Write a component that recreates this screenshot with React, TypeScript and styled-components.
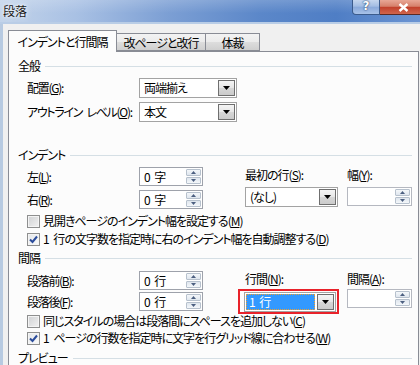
import React from 'react'
import styled, { createGlobalStyle } from 'styled-components'

const GlobalStyle = createGlobalStyle`
  html, body {
    margin: 0;
    padding: 0;
  }
  body {
    width: 420px;
    height: 365px;
    overflow: hidden;
    background: #f0f0f0;
    font-family: "Noto Sans CJK JP", "Noto Sans", sans-serif;
    font-size: 12px;
    letter-spacing: -1px;
    word-spacing: 3px;
    color: #000;
    font-feature-settings: "palt";
  }
`

const Window = styled.div`
  width: 420px;
  height: 365px;
  overflow: hidden;
  display: flex;
  flex-direction: column;
`

const TitleBar = styled.div`
  flex: none;
  height: 22px;
  display: flex;
  align-items: flex-start;
  background:
    linear-gradient(rgba(255, 255, 255, 0.18), rgba(255, 255, 255, 0) 60%),
    linear-gradient(to right, #c3d4ea 0%, #a9c1e4 18%, #7c9fd4 40%, #5b87c9 62%, #4f7ec5 80%, #6b94d2 100%);
  border-bottom: 2px solid #b9cde6;
`

const Title = styled.span`
  padding: 3px 0 0 3px;
  line-height: 15px;
  letter-spacing: 0;
  color: #1a1a1a;
  text-shadow: 0 0 3px #fff, 0 0 6px #e8f0fa;
`

const CaptionButtons = styled.div`
  margin-left: auto;
  display: flex;
`

const HelpButton = styled.div`
  width: 28px;
  height: 15px;
  box-sizing: border-box;
  border: 1px solid #3b5b8c;
  border-top: none;
  border-radius: 0 0 0 4px;
  background: linear-gradient(#c5d6ee 0%, #a3bde3 45%, #8aa9da 50%, #a8c2e8 100%);
  color: #fff;
  font-family: "DejaVu Sans", sans-serif;
  font-weight: bold;
  font-size: 12px;
  letter-spacing: 0;
  line-height: 13px;
  text-align: center;
  text-shadow: 0 0 2px #26426e, 0 0 1px #26426e;
`

const CloseButton = styled.div`
  width: 40px;
  height: 15px;
  box-sizing: border-box;
  border-bottom: 1px solid #5a2a24;
  background: linear-gradient(#e8a796 0%, #d6806b 45%, #c2412c 52%, #d0664c 100%);
  display: flex;
  align-items: center;
  justify-content: flex-start;
  padding-left: 18px;
`

const Client = styled.div`
  flex: 1;
  display: flex;
  flex-direction: column;
  border-left: 3px solid #b7cae1;
  padding: 6px 1px 0 5px;
  min-height: 0;
`

const TabStrip = styled.div`
  display: flex;
  align-items: flex-end;
  height: 21px;
  position: relative;
  z-index: 1;
`

const Tab = styled.div<{ $active?: boolean; $width: number; $first?: boolean }>`
  box-sizing: border-box;
  width: ${({ $width }) => $width}px;
  height: ${({ $active }) => ($active ? 22 : 18)}px;
  margin-bottom: ${({ $active }) => ($active ? -1 : 0)}px;
  border: 1px solid #898c95;
  border-bottom: ${({ $active }) => ($active ? 'none' : '1px solid #898c95')};
  border-left: ${({ $first }) => ($first ? '1px solid #898c95' : 'none')};
  background: ${({ $active }) =>
    $active ? '#fcfcfc' : 'linear-gradient(#f3f3f3 0%, #ebebeb 50%, #dddddd 51%, #cfcfcf 100%)'};
  display: flex;
  align-items: center;
  justify-content: center;
  line-height: 14px;
  padding-top: ${({ $active }) => ($active ? 0 : 1)}px;
`

const Panel = styled.div`
  flex: 1;
  border: 1px solid #898c95;
  border-bottom: none;
  background: #fcfcfc;
  padding: 7px 6px 0 9px;
  display: flex;
  flex-direction: column;
`

const SectionHeader = styled.div<{ $top: number }>`
  display: flex;
  align-items: center;
  gap: 5px;
  height: 14px;
  line-height: 14px;
  margin-top: ${({ $top }) => $top}px;
`

const HeaderLine = styled.div`
  flex: 1;
  height: 1px;
  background: #d5dfe5;
`

const SectionBody = styled.div<{ $top: number }>`
  padding-left: 9px;
  margin-top: ${({ $top }) => $top}px;
  display: flex;
  flex-direction: column;
`

const Rows = styled.div<{ $gap: number }>`
  display: flex;
  flex-direction: column;
  gap: ${({ $gap }) => $gap}px;
`

const Row = styled.div`
  display: flex;
  align-items: center;
`

const Label = styled.span`
  width: 112px;
  line-height: 14px;
  letter-spacing: -1.3px;
  white-space: nowrap;
`

const Columns = styled.div`
  display: flex;
  align-items: flex-start;
`

const RightGroup = styled.div`
  margin-left: 42px;
  display: grid;
  grid-template-columns: 93px 65px;
  column-gap: 9px;
  align-items: start;
`

const FieldCaption = styled.div<{ $height: number }>`
  height: ${({ $height }) => $height}px;
  line-height: 16px;
  white-space: nowrap;
`

const SpinBox = styled.div<{ $width: number; $disabled?: boolean }>`
  box-sizing: border-box;
  width: ${({ $width }) => $width}px;
  height: 19px;
  border: 1px solid ${({ $disabled }) => ($disabled ? '#b5b8c0' : '#9ea2ab')};
  background: #fff;
  display: flex;
  align-items: stretch;
`

const FieldText = styled.span`
  flex: 1;
  padding-left: 4px;
  line-height: 17px;
  white-space: nowrap;
`

const SpinButtons = styled.div`
  width: 15px;
  margin: 1px;
  display: flex;
  flex-direction: column;
  gap: 1px;
`

const SpinButton = styled.div<{ $down?: boolean }>`
  flex: 1;
  box-sizing: border-box;
  border: 1px solid #b7c1cd;
  border-radius: 1px;
  background: ${({ $down }) =>
    $down ? 'linear-gradient(#dfe6ee, #f4f7fa)' : 'linear-gradient(#f4f7fa, #dfe6ee)'};
  display: flex;
  align-items: center;
  justify-content: center;
`

const ComboBox = styled.div<{ $width: number }>`
  box-sizing: border-box;
  width: ${({ $width }) => $width}px;
  height: 20px;
  border: 1px solid #a3a3a3;
  background: #fff;
  display: flex;
  align-items: stretch;
`

const ComboText = styled.span<{ $selected?: boolean }>`
  flex: 1;
  margin: 1px;
  padding-left: 2px;
  line-height: 14px;
  white-space: nowrap;
  box-sizing: border-box;
  color: ${({ $selected }) => ($selected ? '#fff' : '#000')};
  background: ${({ $selected }) => ($selected ? '#3399ff' : 'transparent')};
  border: 1px dotted ${({ $selected }) => ($selected ? '#f0a030' : 'transparent')};
`

const DropButton = styled.div`
  width: 17px;
  margin: 1px;
  box-sizing: border-box;
  border: 1px solid #6f6f6f;
  background: linear-gradient(#f4f4f4 0%, #e6e6e6 50%, #d6d6d6 51%, #cbcbcb 100%);
  display: flex;
  align-items: center;
  justify-content: center;
`

const Highlight = styled.div`
  margin-left: -7px;
  border: 2px solid #e8222a;
  padding: 1px 1px 0 4px;
  width: fit-content;
`

const CheckRow = styled.label<{ $top: number }>`
  display: flex;
  align-items: center;
  gap: 3px;
  height: 14px;
  margin-top: ${({ $top }) => $top}px;
  white-space: nowrap;
  line-height: 14px;
`

const CheckBox = styled.span<{ $checked?: boolean }>`
  box-sizing: border-box;
  width: 13px;
  height: 13px;
  flex: none;
  border: 1px solid #8e8f8f;
  background: ${({ $checked }) =>
    $checked ? 'linear-gradient(135deg, #e4e7ea, #fafafa)' : 'linear-gradient(135deg, #cfd1d3, #f2f2f2)'};
  box-shadow: inset 0 0 0 1px #f4f4f4;
  display: flex;
  align-items: center;
  justify-content: center;
`

const Key = styled.u`
  text-underline-offset: 1px;
`

const Arrow = ({ up }: { up?: boolean }) => (
  <svg width="5" height="3" viewBox="0 0 5 3">
    <path d={up ? 'M0 3 L2.5 0 L5 3 Z' : 'M0 0 L2.5 3 L5 0 Z'} fill="#4c5f80" />
  </svg>
)

const DownTriangle = () => (
  <svg width="7" height="4" viewBox="0 0 7 4">
    <path d="M0 0 H7 L3.5 4 Z" fill="#000" />
  </svg>
)

const Spin = ({ value, width = 64, disabled }: { value?: string; width?: number; disabled?: boolean }) => (
  <SpinBox $width={width} $disabled={disabled}>
    <FieldText>{value}</FieldText>
    <SpinButtons>
      <SpinButton><Arrow up /></SpinButton>
      <SpinButton $down><Arrow /></SpinButton>
    </SpinButtons>
  </SpinBox>
)

const Combo = ({ value, width, selected }: { value: string; width: number; selected?: boolean }) => (
  <ComboBox $width={width}>
    <ComboText $selected={selected}>{value}</ComboText>
    <DropButton><DownTriangle /></DropButton>
  </ComboBox>
)

const Check = ({ checked, top, children }: { checked?: boolean; top: number; children: React.ReactNode }) => (
  <CheckRow $top={top}>
    <CheckBox $checked={checked}>
      {checked && (
        <svg width="9" height="9" viewBox="0 0 9 9">
          <path d="M1 4.5 L3.5 7 L8 1.5" fill="none" stroke="#2b4c9b" strokeWidth="2" />
        </svg>
      )}
    </CheckBox>
    <span>{children}</span>
  </CheckRow>
)

const Section = ({ title, top }: { title: string; top: number }) => (
  <SectionHeader $top={top}>
    <span>{title}</span>
    <HeaderLine />
  </SectionHeader>
)

export default function App() {
  return (
    <>
      <GlobalStyle />
      <Window>
        <TitleBar>
          <Title>段落</Title>
          <CaptionButtons>
            <HelpButton>?</HelpButton>
            <CloseButton>
              <svg width="11" height="9" viewBox="0 0 11 9">
                <path d="M1.5 1 L9.5 8 M9.5 1 L1.5 8" stroke="#fff" strokeWidth="2.4" />
              </svg>
            </CloseButton>
          </CaptionButtons>
        </TitleBar>
        <Client>
          <TabStrip>
            <Tab $active $first $width={109}>インデントと行間隔</Tab>
            <Tab $width={89}>改ページと改行</Tab>
            <Tab $width={54}>体裁</Tab>
          </TabStrip>
          <Panel>
            <Section title="全般" top={0} />
            <SectionBody $top={5}>
              <Rows $gap={4}>
                <Row>
                  <Label>配置(<Key>G</Key>):</Label>
                  <Combo value="両端揃え" width={98} />
                </Row>
                <Row>
                  <Label>アウトライン レベル(<Key>O</Key>):</Label>
                  <Combo value="本文" width={98} />
                </Row>
              </Rows>
            </SectionBody>

            <Section title="インデント" top={26} />
            <SectionBody $top={5}>
              <Columns>
                <Rows $gap={4}>
                  <Row>
                    <Label>左(<Key>L</Key>):</Label>
                    <Spin value="0 字" />
                  </Row>
                  <Row>
                    <Label>右(<Key>R</Key>):</Label>
                    <Spin value="0 字" />
                  </Row>
                </Rows>
                <RightGroup>
                  <FieldCaption $height={20}>最初の行(<Key>S</Key>):</FieldCaption>
                  <FieldCaption $height={20}>幅(<Key>Y</Key>):</FieldCaption>
                  <Combo value="(なし)" width={93} />
                  <Spin width={65} disabled />
                </RightGroup>
              </Columns>
              <Check top={5}>見開きページのインデント幅を設定する(<Key>M</Key>)</Check>
              <Check top={4} checked>1 行の文字数を指定時に右のインデント幅を自動調整する(<Key>D</Key>)</Check>
            </SectionBody>

            <Section title="間隔" top={5} />
            <SectionBody $top={6}>
              <Columns>
                <Rows $gap={2}>
                  <Row>
                    <Label>段落前(<Key>B</Key>):</Label>
                    <Spin value="0 行" />
                  </Row>
                  <Row>
                    <Label>段落後(<Key>F</Key>):</Label>
                    <Spin value="0 行" />
                  </Row>
                </Rows>
                <RightGroup>
                  <FieldCaption $height={18}>行間(<Key>N</Key>):</FieldCaption>
                  <FieldCaption $height={18}>間隔(<Key>A</Key>):</FieldCaption>
                  <Highlight>
                    <Combo value="1 行" width={92} selected />
                  </Highlight>
                  <Spin width={65} disabled />
                </RightGroup>
              </Columns>
              <Check top={0}>同じスタイルの場合は段落間にスペースを追加しない(<Key>C</Key>)</Check>
              <Check top={3} checked>1 ページの行数を指定時に文字を行グリッド線に合わせる(<Key>W</Key>)</Check>
            </SectionBody>

            <Section title="プレビュー" top={6} />
          </Panel>
        </Client>
      </Window>
    </>
  )
}
